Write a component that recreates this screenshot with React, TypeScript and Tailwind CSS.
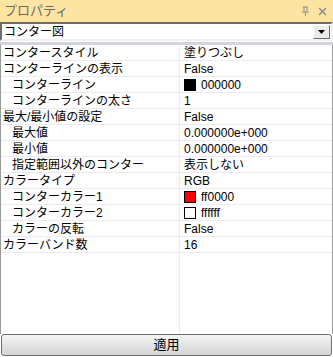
import { Fragment } from "react";

type Row = {
  label: string;
  value: string;
  indent?: boolean;
  swatch?: string;
};

const rows: Row[] = [
  { label: "コンタースタイル", value: "塗りつぶし" },
  { label: "コンターラインの表示", value: "False" },
  { label: "コンターライン", value: "000000", indent: true, swatch: "bg-black" },
  { label: "コンターラインの太さ", value: "1", indent: true },
  { label: "最大/最小値の設定", value: "False" },
  { label: "最大値", value: "0.000000e+000", indent: true },
  { label: "最小値", value: "0.000000e+000", indent: true },
  { label: "指定範囲以外のコンター", value: "表示しない", indent: true },
  { label: "カラータイプ", value: "RGB" },
  { label: "コンターカラー1", value: "ff0000", indent: true, swatch: "bg-[#ff0000]" },
  { label: "コンターカラー2", value: "ffffff", indent: true, swatch: "bg-white" },
  { label: "カラーの反転", value: "False", indent: true },
  { label: "カラーバンド数", value: "16" },
];

const font = "font-['Liberation_Sans','Noto_Sans_CJK_JP',sans-serif]";

export default function App() {
  return (
    <div className={`flex h-[357px] w-[333px] flex-col bg-white text-[12px] text-black ${font}`}>
      {/* title bar */}
      <div className="flex h-[22px] items-center justify-between bg-[#fde4a2] pl-[4px] pr-[6px]">
        <span className="text-[13px] text-[#6b6b6b]">プロパティ</span>
        <div className="flex items-center gap-[8px] text-[#8a8a8a]">
          <svg width="9" height="10" viewBox="0 0 9 10">
            <path d="M2 1h5M3 1v5M6 1v5M1 6h7M4.5 6v4" stroke="currentColor" strokeWidth="1" fill="none" />
          </svg>
          <svg width="9" height="9" viewBox="0 0 9 9">
            <path d="M1 1l7 7M8 1l-7 7" stroke="currentColor" strokeWidth="1.4" fill="none" />
          </svg>
        </div>
      </div>

      {/* combobox */}
      <div className="flex h-[19px] items-center border-2 border-t-[#6d6d6d] border-l-[#6d6d6d] border-r-[#f0f0f0] border-b-[#f0f0f0] bg-white pl-[2px]">
        <span className="flex-1 leading-none">コンター図</span>
        <div className="mr-[1px] flex h-[14px] w-[17px] items-center justify-center border border-t-white border-l-white border-r-[#6d6d6d] border-b-[#6d6d6d] bg-[#ebebeb]">
          <svg width="7" height="4" viewBox="0 0 7 4">
            <path d="M0 0h7L3.5 4z" fill="black" />
          </svg>
        </div>
      </div>

      <div className="h-px bg-white" />
      <div className="h-[3px] bg-[#d4d4dc]" />

      {/* property grid */}
      <div className="flex flex-1 flex-col border-x border-x-[#9a9a9a]">
        <div className="grid grid-cols-[179px_1fr]">
          {rows.map((r) => (
            <Fragment key={r.label}>
              <div
                className={`flex h-[16px] items-center border-b border-r border-[#ebebf3] leading-none ${r.indent ? "pl-[11px]" : "pl-[2px]"}`}
              >
                {r.label}
              </div>
              <div className="flex h-[16px] items-center gap-[5px] border-b border-[#ebebf3] pl-[4px] leading-none">
                {r.swatch ? <span className={`h-[12px] w-[12px] border border-black ${r.swatch}`} /> : null}
                <span>{r.value}</span>
              </div>
            </Fragment>
          ))}
        </div>
        <div className="grid flex-1 grid-cols-[179px_1fr]">
          <div className="border-r border-[#ebebf3]" />
          <div />
        </div>
      </div>

      {/* apply button */}
      <div className="px-px pb-px">
        <button
          type="button"
          className="flex h-[22px] w-full items-center justify-center rounded-[3px] border border-[#707070] bg-gradient-to-b from-[#f4f4f4] to-[#d4d4d4] text-[13px]"
        >
          適用
        </button>
      </div>
    </div>
  );
}
